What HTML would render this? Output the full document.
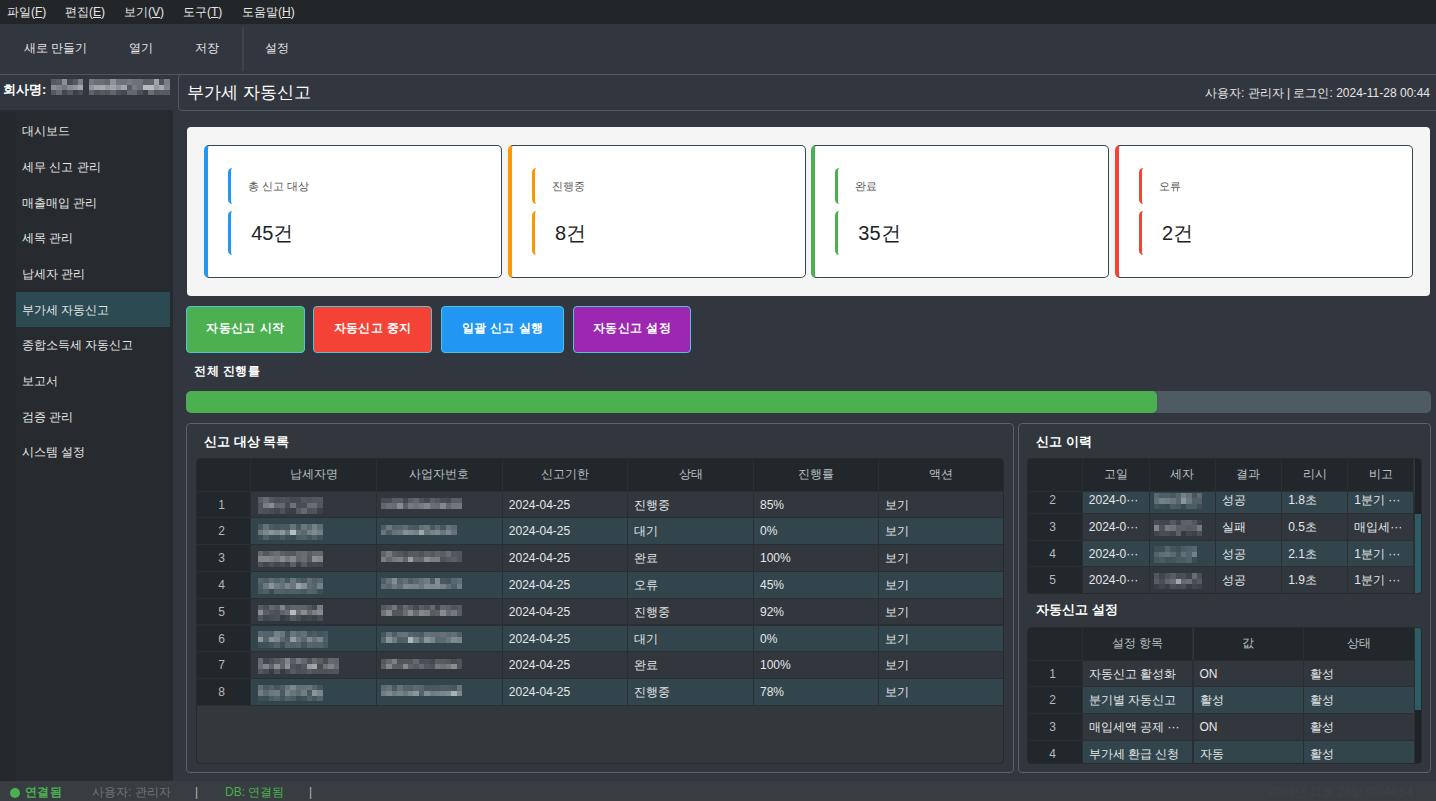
<!DOCTYPE html><html lang="ko"><head><meta charset="utf-8"><title>부가세 자동신고</title><style>
*{box-sizing:border-box;margin:0;padding:0}
html,body{width:1436px;height:801px;overflow:hidden;background:#32363e;}
body{position:relative;font-family:"Liberation Sans",sans-serif;font-size:12px;color:#e4e7e9;}
.abs{position:absolute}
.menubar{left:0;top:0;width:1436px;height:24px;background:#232629}
.menubar span{position:absolute;top:0;line-height:24px;font-size:12px;color:#e6e6e6;white-space:nowrap}
.menubar u{text-decoration:underline}
.toolbar{left:0;top:24px;width:1436px;height:50.5px;background:#32363e;border-bottom:1.5px solid #4c565b}
.toolbar span{position:absolute;top:0;line-height:49px;font-size:12px;color:#e6e6e6;white-space:nowrap;transform:translateX(-50%)}
.tsep{left:242px;top:27px;width:2px;height:44px;background:#3d454b}
.company{left:3px;top:80.7px;font-size:13px;font-weight:bold;color:#fff;line-height:18px;white-space:nowrap}
.sidebar{left:0;top:110px;width:173px;height:672px;background:#272b2f;border-radius:0 3px 3px 0}
.sidebar .stripe{position:absolute;left:0;top:2px;width:16px;bottom:0;background:#25292d;border-radius:0 0 0 3px}
.sidebar .it{position:absolute;left:16px;width:154px;height:35.6px;line-height:37.6px;padding-left:6px;font-size:12px;color:#e6e6e6;white-space:nowrap}
.sidebar .sel{background:#2b4a52}
.hbox{left:178px;top:73.8px;width:1262px;height:37.2px;border:1.4px solid #4f5a5f;border-radius:4px;background:#32363e}
.htitle{left:187px;top:81px;font-size:17px;line-height:24px;color:#fff;white-space:nowrap}
.hright{right:6px;top:84px;font-size:12px;line-height:18px;color:#e6e6e6;white-space:nowrap}
.panel{left:187px;top:127px;width:1243px;height:168.5px;background:#f5f5f5;border-radius:4px}
.card{top:144.5px;width:297.5px;height:133px;background:#fff;border:1.8px solid #37474f;border-left-width:4px;border-radius:5px}
.card .bar{position:absolute;left:20px;width:9px;border-left:3.6px solid;border-radius:5px}
.card .lb{position:absolute;left:40px;top:32px;font-size:11px;line-height:16px;color:#555;white-space:nowrap}
.card .val{position:absolute;left:43px;top:74px;font-size:20px;line-height:26px;color:#222;white-space:nowrap}
.btn{top:306px;height:46.5px;border:1.5px solid #4fc4dc;border-radius:4px;color:#fff;font-weight:bold;font-size:12px;text-align:center;line-height:42.5px;letter-spacing:.4px;white-space:nowrap}
.plabel{left:194px;top:362px;font-size:12px;font-weight:bold;color:#fff;line-height:18px;white-space:nowrap;letter-spacing:.5px}
.prog{left:186px;top:391px;width:1244.5px;height:22px;background:#4f5b62;border-radius:5px;overflow:hidden}
.prog i{display:block;width:970.5px;height:100%;background:#4caf50;border-radius:5px}
.group{border:1.8px solid #54646a;border-radius:4px;background:#31373c}
.gtitle{font-size:13px;font-weight:bold;color:#fff;line-height:18px;white-space:nowrap}
.tbl{background:#33383d;border:1.5px solid #272b30;border-radius:4px;overflow:hidden}
.tbl .c{position:absolute;overflow:hidden;white-space:nowrap;font-size:12px;border-right:1px solid #2a2f34;border-bottom:1px solid #2a2f34}
.tbl .h{background:#22272b;color:#b9c0c4;text-align:center}
.tbl .n{background:#22272b;color:#b2b9bd;text-align:center;padding-right:4px}
.tbl .a{background:#31373d;color:#e4e7e9;padding-left:6px}
.tbl .b{background:#33454c;color:#e4e7e9;padding-left:6px}
.mz{position:absolute;filter:blur(.6px)}
.mz i{display:block;height:5.4px}
.status{left:0;top:780.5px;width:1436px;height:20.5px;background:#383d41}
.status span{position:absolute;top:1.5px;line-height:20px;font-size:12px;white-space:nowrap}
</style></head><body>
<div class="abs menubar">
<span style="left:7px">파일(<u>F</u>)</span>
<span style="left:65px">편집(<u>E</u>)</span>
<span style="left:124px">보기(<u>V</u>)</span>
<span style="left:183px">도구(<u>T</u>)</span>
<span style="left:242px">도움말(<u>H</u>)</span>
</div>
<div class="abs toolbar">
<span style="left:55.5px">새로 만들기</span>
<span style="left:141px">열기</span>
<span style="left:207px">저장</span>
<span style="left:276.5px">설정</span>
</div><div class="abs tsep"></div>
<div class="abs company">회사명:</div>
<div class="mz" style="left:51px;top:79.3px;width:118.8px"><i style="background:linear-gradient(90deg,rgba(205,210,214,0.22) 0.0px 5.4px,rgba(205,210,214,0.26) 5.4px 10.8px,rgba(205,210,214,0.57) 10.8px 16.2px,rgba(205,210,214,0.14) 16.2px 21.6px,rgba(205,210,214,0.23) 21.6px 27.0px,rgba(205,210,214,0.48) 27.0px 32.4px,rgba(205,210,214,0.00) 32.4px 37.8px,rgba(205,210,214,0.43) 37.8px 43.2px,rgba(205,210,214,0.36) 43.2px 48.6px,rgba(205,210,214,0.36) 48.6px 54.0px,rgba(205,210,214,0.32) 54.0px 59.4px,rgba(205,210,214,0.59) 59.4px 64.8px,rgba(205,210,214,0.40) 64.8px 70.2px,rgba(205,210,214,0.39) 70.2px 75.6px,rgba(205,210,214,0.44) 75.6px 81.0px,rgba(205,210,214,0.39) 81.0px 86.4px,rgba(205,210,214,0.39) 86.4px 91.8px,rgba(205,210,214,0.27) 91.8px 97.2px,rgba(205,210,214,0.29) 97.2px 102.6px,rgba(205,210,214,0.71) 102.6px 108.0px,rgba(205,210,214,0.18) 108.0px 113.4px,rgba(205,210,214,0.47) 113.4px 118.8px)"></i><i style="background:linear-gradient(90deg,rgba(205,210,214,0.58) 0.0px 5.4px,rgba(205,210,214,0.50) 5.4px 10.8px,rgba(205,210,214,0.41) 10.8px 16.2px,rgba(205,210,214,0.55) 16.2px 21.6px,rgba(205,210,214,0.61) 21.6px 27.0px,rgba(205,210,214,0.72) 27.0px 32.4px,rgba(205,210,214,0.00) 32.4px 37.8px,rgba(205,210,214,0.61) 37.8px 43.2px,rgba(205,210,214,0.72) 43.2px 48.6px,rgba(205,210,214,0.75) 48.6px 54.0px,rgba(205,210,214,0.63) 54.0px 59.4px,rgba(205,210,214,0.71) 59.4px 64.8px,rgba(205,210,214,0.59) 64.8px 70.2px,rgba(205,210,214,0.72) 70.2px 75.6px,rgba(205,210,214,0.24) 75.6px 81.0px,rgba(205,210,214,0.44) 81.0px 86.4px,rgba(205,210,214,0.37) 86.4px 91.8px,rgba(205,210,214,0.85) 91.8px 97.2px,rgba(205,210,214,0.85) 97.2px 102.6px,rgba(205,210,214,0.64) 102.6px 108.0px,rgba(205,210,214,0.74) 108.0px 113.4px,rgba(205,210,214,0.50) 113.4px 118.8px)"></i><i style="background:linear-gradient(90deg,rgba(205,210,214,0.22) 0.0px 5.4px,rgba(205,210,214,0.35) 5.4px 10.8px,rgba(205,210,214,0.11) 10.8px 16.2px,rgba(205,210,214,0.22) 16.2px 21.6px,rgba(205,210,214,0.07) 21.6px 27.0px,rgba(205,210,214,0.14) 27.0px 32.4px,rgba(205,210,214,0.00) 32.4px 37.8px,rgba(205,210,214,0.30) 37.8px 43.2px,rgba(205,210,214,0.18) 43.2px 48.6px,rgba(205,210,214,0.23) 48.6px 54.0px,rgba(205,210,214,0.21) 54.0px 59.4px,rgba(205,210,214,0.31) 59.4px 64.8px,rgba(205,210,214,0.17) 64.8px 70.2px,rgba(205,210,214,0.12) 70.2px 75.6px,rgba(205,210,214,0.32) 75.6px 81.0px,rgba(205,210,214,0.32) 81.0px 86.4px,rgba(205,210,214,0.17) 86.4px 91.8px,rgba(205,210,214,0.06) 91.8px 97.2px,rgba(205,210,214,0.36) 97.2px 102.6px,rgba(205,210,214,0.22) 102.6px 108.0px,rgba(205,210,214,0.24) 108.0px 113.4px,rgba(205,210,214,0.24) 113.4px 118.8px)"></i></div>
<div class="abs sidebar"><div class="stripe"></div>
<div class="it" style="top:3.30px">대시보드</div>
<div class="it" style="top:38.95px">세무 신고 관리</div>
<div class="it" style="top:74.60px">매출매입 관리</div>
<div class="it" style="top:110.25px">세목 관리</div>
<div class="it" style="top:145.90px">납세자 관리</div>
<div class="it sel" style="top:181.55px">부가세 자동신고</div>
<div class="it" style="top:217.20px">종합소득세 자동신고</div>
<div class="it" style="top:252.85px">보고서</div>
<div class="it" style="top:288.50px">검증 관리</div>
<div class="it" style="top:324.15px">시스템 설정</div>
</div>
<div class="abs hbox"></div><div class="abs htitle">부가세 자동신고</div>
<div class="abs hright">사용자: 관리자 | 로그인: 2024-11-28 00:44</div>
<div class="abs panel"></div>
<div class="abs card" style="left:204.2px;border-left-color:#2196f3"><div class="bar" style="top:22px;height:36.5px;border-left-color:#2196f3"></div><div class="bar" style="top:65px;height:44px;border-left-color:#2196f3"></div><div class="lb">총 신고 대상</div><div class="val">45건</div></div>
<div class="abs card" style="left:508px;border-left-color:#ff9800"><div class="bar" style="top:22px;height:36.5px;border-left-color:#ff9800"></div><div class="bar" style="top:65px;height:44px;border-left-color:#ff9800"></div><div class="lb">진행중</div><div class="val">8건</div></div>
<div class="abs card" style="left:811.3px;border-left-color:#4caf50"><div class="bar" style="top:22px;height:36.5px;border-left-color:#4caf50"></div><div class="bar" style="top:65px;height:44px;border-left-color:#4caf50"></div><div class="lb">완료</div><div class="val">35건</div></div>
<div class="abs card" style="left:1115px;border-left-color:#f44336"><div class="bar" style="top:22px;height:36.5px;border-left-color:#f44336"></div><div class="bar" style="top:65px;height:44px;border-left-color:#f44336"></div><div class="lb">오류</div><div class="val">2건</div></div>
<div class="abs btn" style="left:186px;width:118.5px;background:#4caf50">자동신고 시작</div>
<div class="abs btn" style="left:313.2px;width:118.8px;background:#f44336">자동신고 중지</div>
<div class="abs btn" style="left:441px;width:123px;background:#2196f3">일괄 신고 실행</div>
<div class="abs btn" style="left:573px;width:118.3px;background:#9c27b0">자동신고 설정</div>
<div class="abs plabel">전체 진행률</div>
<div class="abs prog"><i></i></div>
<div class="abs group" style="left:186px;top:422.5px;width:827.5px;height:350.8px"></div>
<div class="abs gtitle" style="left:204px;top:432.5px">신고 대상 목록</div>
<div class="abs tbl" style="left:196px;top:458px;width:808px;height:306px"><div style="position:absolute;left:0;top:31.5px;width:807px;height:215.4px;background:#2a2f34"></div><div class="c n" style="left:0px;top:32.50px;width:54.4px;height:26.8px;line-height:27.8px">1</div><div class="c a" style="left:54.4px;top:32.50px;width:125.79999999999998px;height:26.8px"><div class="mz" style="left:6.5px;top:5.9px;width:64.8px"><i style="background:linear-gradient(90deg,rgba(205,210,214,0.25) 0.0px 5.4px,rgba(205,210,214,0.35) 5.4px 10.8px,rgba(205,210,214,0.22) 10.8px 16.2px,rgba(205,210,214,0.16) 16.2px 21.6px,rgba(205,210,214,0.18) 21.6px 27.0px,rgba(205,210,214,0.16) 27.0px 32.4px,rgba(205,210,214,0.12) 32.4px 37.8px,rgba(205,210,214,0.12) 37.8px 43.2px,rgba(205,210,214,0.20) 43.2px 48.6px,rgba(205,210,214,0.18) 48.6px 54.0px,rgba(205,210,214,0.21) 54.0px 59.4px,rgba(205,210,214,0.21) 59.4px 64.8px)"></i><i style="background:linear-gradient(90deg,rgba(205,210,214,0.19) 0.0px 5.4px,rgba(205,210,214,0.45) 5.4px 10.8px,rgba(205,210,214,0.55) 10.8px 16.2px,rgba(205,210,214,0.31) 16.2px 21.6px,rgba(205,210,214,0.33) 21.6px 27.0px,rgba(205,210,214,0.14) 27.0px 32.4px,rgba(205,210,214,0.39) 32.4px 37.8px,rgba(205,210,214,0.15) 37.8px 43.2px,rgba(205,210,214,0.14) 43.2px 48.6px,rgba(205,210,214,0.34) 48.6px 54.0px,rgba(205,210,214,0.36) 54.0px 59.4px,rgba(205,210,214,0.21) 59.4px 64.8px)"></i><i style="background:linear-gradient(90deg,rgba(205,210,214,0.19) 0.0px 5.4px,rgba(205,210,214,0.17) 5.4px 10.8px,rgba(205,210,214,0.14) 10.8px 16.2px,rgba(205,210,214,0.10) 16.2px 21.6px,rgba(205,210,214,0.18) 21.6px 27.0px,rgba(205,210,214,0.07) 27.0px 32.4px,rgba(205,210,214,0.05) 32.4px 37.8px,rgba(205,210,214,0.23) 37.8px 43.2px,rgba(205,210,214,0.33) 43.2px 48.6px,rgba(205,210,214,0.18) 48.6px 54.0px,rgba(205,210,214,0.20) 54.0px 59.4px,rgba(205,210,214,0.07) 59.4px 64.8px)"></i></div></div><div class="c a" style="left:180.2px;top:32.50px;width:125.60000000000002px;height:26.8px"><div class="mz" style="left:4px;top:6.4px;width:81.0px"><i style="background:linear-gradient(90deg,rgba(205,210,214,0.14) 0.0px 5.4px,rgba(205,210,214,0.14) 5.4px 10.8px,rgba(205,210,214,0.25) 10.8px 16.2px,rgba(205,210,214,0.25) 16.2px 21.6px,rgba(205,210,214,0.11) 21.6px 27.0px,rgba(205,210,214,0.25) 27.0px 32.4px,rgba(205,210,214,0.31) 32.4px 37.8px,rgba(205,210,214,0.19) 37.8px 43.2px,rgba(205,210,214,0.13) 43.2px 48.6px,rgba(205,210,214,0.27) 48.6px 54.0px,rgba(205,210,214,0.21) 54.0px 59.4px,rgba(205,210,214,0.15) 59.4px 64.8px,rgba(205,210,214,0.13) 64.8px 70.2px,rgba(205,210,214,0.25) 70.2px 75.6px,rgba(205,210,214,0.25) 75.6px 81.0px)"></i><i style="background:linear-gradient(90deg,rgba(205,210,214,0.30) 0.0px 5.4px,rgba(205,210,214,0.37) 5.4px 10.8px,rgba(205,210,214,0.34) 10.8px 16.2px,rgba(205,210,214,0.54) 16.2px 21.6px,rgba(205,210,214,0.25) 21.6px 27.0px,rgba(205,210,214,0.43) 27.0px 32.4px,rgba(205,210,214,0.39) 32.4px 37.8px,rgba(205,210,214,0.44) 37.8px 43.2px,rgba(205,210,214,0.51) 43.2px 48.6px,rgba(205,210,214,0.36) 48.6px 54.0px,rgba(205,210,214,0.35) 54.0px 59.4px,rgba(205,210,214,0.52) 59.4px 64.8px,rgba(205,210,214,0.32) 64.8px 70.2px,rgba(205,210,214,0.41) 70.2px 75.6px,rgba(205,210,214,0.42) 75.6px 81.0px)"></i></div></div><div class="c a" style="left:305.8px;top:32.50px;width:125.59999999999997px;height:26.8px;line-height:27.8px">2024-04-25</div><div class="c a" style="left:431.4px;top:32.50px;width:125.60000000000002px;height:26.8px;line-height:27.8px">진행중</div><div class="c a" style="left:557px;top:32.50px;width:125.39999999999998px;height:26.8px;line-height:27.8px">85%</div><div class="c a" style="left:682.4px;top:32.50px;width:124.60000000000002px;height:26.8px;line-height:27.8px">보기</div><div class="c n" style="left:0px;top:59.30px;width:54.4px;height:26.8px;line-height:27.8px">2</div><div class="c b" style="left:54.4px;top:59.30px;width:125.79999999999998px;height:26.8px"><div class="mz" style="left:6.5px;top:5.9px;width:64.8px"><i style="background:linear-gradient(90deg,rgba(205,210,214,0.13) 0.0px 5.4px,rgba(205,210,214,0.33) 5.4px 10.8px,rgba(205,210,214,0.17) 10.8px 16.2px,rgba(205,210,214,0.12) 16.2px 21.6px,rgba(205,210,214,0.15) 21.6px 27.0px,rgba(205,210,214,0.15) 27.0px 32.4px,rgba(205,210,214,0.34) 32.4px 37.8px,rgba(205,210,214,0.13) 37.8px 43.2px,rgba(205,210,214,0.36) 43.2px 48.6px,rgba(205,210,214,0.26) 48.6px 54.0px,rgba(205,210,214,0.43) 54.0px 59.4px,rgba(205,210,214,0.29) 59.4px 64.8px)"></i><i style="background:linear-gradient(90deg,rgba(205,210,214,0.35) 0.0px 5.4px,rgba(205,210,214,0.47) 5.4px 10.8px,rgba(205,210,214,0.57) 10.8px 16.2px,rgba(205,210,214,0.49) 16.2px 21.6px,rgba(205,210,214,0.59) 21.6px 27.0px,rgba(205,210,214,0.36) 27.0px 32.4px,rgba(205,210,214,0.85) 32.4px 37.8px,rgba(205,210,214,0.33) 37.8px 43.2px,rgba(205,210,214,0.25) 43.2px 48.6px,rgba(205,210,214,0.43) 48.6px 54.0px,rgba(205,210,214,0.50) 54.0px 59.4px,rgba(205,210,214,0.41) 59.4px 64.8px)"></i><i style="background:linear-gradient(90deg,rgba(205,210,214,0.05) 0.0px 5.4px,rgba(205,210,214,0.20) 5.4px 10.8px,rgba(205,210,214,0.08) 10.8px 16.2px,rgba(205,210,214,0.07) 16.2px 21.6px,rgba(205,210,214,0.16) 21.6px 27.0px,rgba(205,210,214,0.07) 27.0px 32.4px,rgba(205,210,214,0.05) 32.4px 37.8px,rgba(205,210,214,0.17) 37.8px 43.2px,rgba(205,210,214,0.19) 43.2px 48.6px,rgba(205,210,214,0.12) 48.6px 54.0px,rgba(205,210,214,0.19) 54.0px 59.4px,rgba(205,210,214,0.10) 59.4px 64.8px)"></i></div></div><div class="c b" style="left:180.2px;top:59.30px;width:125.60000000000002px;height:26.8px"><div class="mz" style="left:4px;top:6.4px;width:75.6px"><i style="background:linear-gradient(90deg,rgba(205,210,214,0.17) 0.0px 5.4px,rgba(205,210,214,0.37) 5.4px 10.8px,rgba(205,210,214,0.22) 10.8px 16.2px,rgba(205,210,214,0.24) 16.2px 21.6px,rgba(205,210,214,0.29) 21.6px 27.0px,rgba(205,210,214,0.17) 27.0px 32.4px,rgba(205,210,214,0.14) 32.4px 37.8px,rgba(205,210,214,0.31) 37.8px 43.2px,rgba(205,210,214,0.36) 43.2px 48.6px,rgba(205,210,214,0.14) 48.6px 54.0px,rgba(205,210,214,0.27) 54.0px 59.4px,rgba(205,210,214,0.13) 59.4px 64.8px,rgba(205,210,214,0.34) 64.8px 70.2px,rgba(205,210,214,0.26) 70.2px 75.6px)"></i><i style="background:linear-gradient(90deg,rgba(205,210,214,0.34) 0.0px 5.4px,rgba(205,210,214,0.18) 5.4px 10.8px,rgba(205,210,214,0.33) 10.8px 16.2px,rgba(205,210,214,0.36) 16.2px 21.6px,rgba(205,210,214,0.54) 21.6px 27.0px,rgba(205,210,214,0.49) 27.0px 32.4px,rgba(205,210,214,0.43) 32.4px 37.8px,rgba(205,210,214,0.70) 37.8px 43.2px,rgba(205,210,214,0.36) 43.2px 48.6px,rgba(205,210,214,0.44) 48.6px 54.0px,rgba(205,210,214,0.49) 54.0px 59.4px,rgba(205,210,214,0.36) 59.4px 64.8px,rgba(205,210,214,0.48) 64.8px 70.2px,rgba(205,210,214,0.33) 70.2px 75.6px)"></i></div></div><div class="c b" style="left:305.8px;top:59.30px;width:125.59999999999997px;height:26.8px;line-height:27.8px">2024-04-25</div><div class="c b" style="left:431.4px;top:59.30px;width:125.60000000000002px;height:26.8px;line-height:27.8px">대기</div><div class="c b" style="left:557px;top:59.30px;width:125.39999999999998px;height:26.8px;line-height:27.8px">0%</div><div class="c b" style="left:682.4px;top:59.30px;width:124.60000000000002px;height:26.8px;line-height:27.8px">보기</div><div class="c n" style="left:0px;top:86.10px;width:54.4px;height:26.8px;line-height:27.8px">3</div><div class="c a" style="left:54.4px;top:86.10px;width:125.79999999999998px;height:26.8px"><div class="mz" style="left:6.5px;top:5.9px;width:64.8px"><i style="background:linear-gradient(90deg,rgba(205,210,214,0.33) 0.0px 5.4px,rgba(205,210,214,0.21) 5.4px 10.8px,rgba(205,210,214,0.30) 10.8px 16.2px,rgba(205,210,214,0.36) 16.2px 21.6px,rgba(205,210,214,0.27) 21.6px 27.0px,rgba(205,210,214,0.23) 27.0px 32.4px,rgba(205,210,214,0.22) 32.4px 37.8px,rgba(205,210,214,0.33) 37.8px 43.2px,rgba(205,210,214,0.35) 43.2px 48.6px,rgba(205,210,214,0.25) 48.6px 54.0px,rgba(205,210,214,0.33) 54.0px 59.4px,rgba(205,210,214,0.33) 59.4px 64.8px)"></i><i style="background:linear-gradient(90deg,rgba(205,210,214,0.50) 0.0px 5.4px,rgba(205,210,214,0.51) 5.4px 10.8px,rgba(205,210,214,0.47) 10.8px 16.2px,rgba(205,210,214,0.42) 16.2px 21.6px,rgba(205,210,214,0.55) 21.6px 27.0px,rgba(205,210,214,0.42) 27.0px 32.4px,rgba(205,210,214,0.53) 32.4px 37.8px,rgba(205,210,214,0.31) 37.8px 43.2px,rgba(205,210,214,0.36) 43.2px 48.6px,rgba(205,210,214,0.23) 48.6px 54.0px,rgba(205,210,214,0.58) 54.0px 59.4px,rgba(205,210,214,0.53) 59.4px 64.8px)"></i><i style="background:linear-gradient(90deg,rgba(205,210,214,0.18) 0.0px 5.4px,rgba(205,210,214,0.10) 5.4px 10.8px,rgba(205,210,214,0.17) 10.8px 16.2px,rgba(205,210,214,0.11) 16.2px 21.6px,rgba(205,210,214,0.15) 21.6px 27.0px,rgba(205,210,214,0.08) 27.0px 32.4px,rgba(205,210,214,0.26) 32.4px 37.8px,rgba(205,210,214,0.07) 37.8px 43.2px,rgba(205,210,214,0.23) 43.2px 48.6px,rgba(205,210,214,0.10) 48.6px 54.0px,rgba(205,210,214,0.12) 54.0px 59.4px,rgba(205,210,214,0.10) 59.4px 64.8px)"></i></div></div><div class="c a" style="left:180.2px;top:86.10px;width:125.60000000000002px;height:26.8px"><div class="mz" style="left:4px;top:6.4px;width:81.0px"><i style="background:linear-gradient(90deg,rgba(205,210,214,0.30) 0.0px 5.4px,rgba(205,210,214,0.44) 5.4px 10.8px,rgba(205,210,214,0.26) 10.8px 16.2px,rgba(205,210,214,0.22) 16.2px 21.6px,rgba(205,210,214,0.16) 21.6px 27.0px,rgba(205,210,214,0.24) 27.0px 32.4px,rgba(205,210,214,0.24) 32.4px 37.8px,rgba(205,210,214,0.18) 37.8px 43.2px,rgba(205,210,214,0.28) 43.2px 48.6px,rgba(205,210,214,0.23) 48.6px 54.0px,rgba(205,210,214,0.30) 54.0px 59.4px,rgba(205,210,214,0.26) 59.4px 64.8px,rgba(205,210,214,0.35) 64.8px 70.2px,rgba(205,210,214,0.21) 70.2px 75.6px,rgba(205,210,214,0.20) 75.6px 81.0px)"></i><i style="background:linear-gradient(90deg,rgba(205,210,214,0.46) 0.0px 5.4px,rgba(205,210,214,0.33) 5.4px 10.8px,rgba(205,210,214,0.43) 10.8px 16.2px,rgba(205,210,214,0.48) 16.2px 21.6px,rgba(205,210,214,0.30) 21.6px 27.0px,rgba(205,210,214,0.68) 27.0px 32.4px,rgba(205,210,214,0.33) 32.4px 37.8px,rgba(205,210,214,0.31) 37.8px 43.2px,rgba(205,210,214,0.56) 43.2px 48.6px,rgba(205,210,214,0.46) 48.6px 54.0px,rgba(205,210,214,0.47) 54.0px 59.4px,rgba(205,210,214,0.18) 59.4px 64.8px,rgba(205,210,214,0.23) 64.8px 70.2px,rgba(205,210,214,0.27) 70.2px 75.6px,rgba(205,210,214,0.18) 75.6px 81.0px)"></i></div></div><div class="c a" style="left:305.8px;top:86.10px;width:125.59999999999997px;height:26.8px;line-height:27.8px">2024-04-25</div><div class="c a" style="left:431.4px;top:86.10px;width:125.60000000000002px;height:26.8px;line-height:27.8px">완료</div><div class="c a" style="left:557px;top:86.10px;width:125.39999999999998px;height:26.8px;line-height:27.8px">100%</div><div class="c a" style="left:682.4px;top:86.10px;width:124.60000000000002px;height:26.8px;line-height:27.8px">보기</div><div class="c n" style="left:0px;top:112.90px;width:54.4px;height:26.8px;line-height:27.8px">4</div><div class="c b" style="left:54.4px;top:112.90px;width:125.79999999999998px;height:26.8px"><div class="mz" style="left:6.5px;top:5.9px;width:64.8px"><i style="background:linear-gradient(90deg,rgba(205,210,214,0.23) 0.0px 5.4px,rgba(205,210,214,0.18) 5.4px 10.8px,rgba(205,210,214,0.29) 10.8px 16.2px,rgba(205,210,214,0.22) 16.2px 21.6px,rgba(205,210,214,0.29) 21.6px 27.0px,rgba(205,210,214,0.13) 27.0px 32.4px,rgba(205,210,214,0.35) 32.4px 37.8px,rgba(205,210,214,0.20) 37.8px 43.2px,rgba(205,210,214,0.14) 43.2px 48.6px,rgba(205,210,214,0.30) 48.6px 54.0px,rgba(205,210,214,0.20) 54.0px 59.4px,rgba(205,210,214,0.24) 59.4px 64.8px)"></i><i style="background:linear-gradient(90deg,rgba(205,210,214,0.18) 0.0px 5.4px,rgba(205,210,214,0.37) 5.4px 10.8px,rgba(205,210,214,0.57) 10.8px 16.2px,rgba(205,210,214,0.39) 16.2px 21.6px,rgba(205,210,214,0.32) 21.6px 27.0px,rgba(205,210,214,0.46) 27.0px 32.4px,rgba(205,210,214,0.35) 32.4px 37.8px,rgba(205,210,214,0.67) 37.8px 43.2px,rgba(205,210,214,0.53) 43.2px 48.6px,rgba(205,210,214,0.28) 48.6px 54.0px,rgba(205,210,214,0.23) 54.0px 59.4px,rgba(205,210,214,0.42) 59.4px 64.8px)"></i><i style="background:linear-gradient(90deg,rgba(205,210,214,0.14) 0.0px 5.4px,rgba(205,210,214,0.18) 5.4px 10.8px,rgba(205,210,214,0.05) 10.8px 16.2px,rgba(205,210,214,0.20) 16.2px 21.6px,rgba(205,210,214,0.20) 21.6px 27.0px,rgba(205,210,214,0.17) 27.0px 32.4px,rgba(205,210,214,0.19) 32.4px 37.8px,rgba(205,210,214,0.18) 37.8px 43.2px,rgba(205,210,214,0.15) 43.2px 48.6px,rgba(205,210,214,0.23) 48.6px 54.0px,rgba(205,210,214,0.20) 54.0px 59.4px,rgba(205,210,214,0.07) 59.4px 64.8px)"></i></div></div><div class="c b" style="left:180.2px;top:112.90px;width:125.60000000000002px;height:26.8px"><div class="mz" style="left:4px;top:6.4px;width:81.0px"><i style="background:linear-gradient(90deg,rgba(205,210,214,0.18) 0.0px 5.4px,rgba(205,210,214,0.32) 5.4px 10.8px,rgba(205,210,214,0.51) 10.8px 16.2px,rgba(205,210,214,0.23) 16.2px 21.6px,rgba(205,210,214,0.30) 21.6px 27.0px,rgba(205,210,214,0.18) 27.0px 32.4px,rgba(205,210,214,0.25) 32.4px 37.8px,rgba(205,210,214,0.33) 37.8px 43.2px,rgba(205,210,214,0.39) 43.2px 48.6px,rgba(205,210,214,0.18) 48.6px 54.0px,rgba(205,210,214,0.51) 54.0px 59.4px,rgba(205,210,214,0.13) 59.4px 64.8px,rgba(205,210,214,0.11) 64.8px 70.2px,rgba(205,210,214,0.24) 70.2px 75.6px,rgba(205,210,214,0.30) 75.6px 81.0px)"></i><i style="background:linear-gradient(90deg,rgba(205,210,214,0.30) 0.0px 5.4px,rgba(205,210,214,0.25) 5.4px 10.8px,rgba(205,210,214,0.38) 10.8px 16.2px,rgba(205,210,214,0.29) 16.2px 21.6px,rgba(205,210,214,0.48) 21.6px 27.0px,rgba(205,210,214,0.45) 27.0px 32.4px,rgba(205,210,214,0.44) 32.4px 37.8px,rgba(205,210,214,0.36) 37.8px 43.2px,rgba(205,210,214,0.51) 43.2px 48.6px,rgba(205,210,214,0.48) 48.6px 54.0px,rgba(205,210,214,0.50) 54.0px 59.4px,rgba(205,210,214,0.44) 59.4px 64.8px,rgba(205,210,214,0.30) 64.8px 70.2px,rgba(205,210,214,0.19) 70.2px 75.6px,rgba(205,210,214,0.40) 75.6px 81.0px)"></i></div></div><div class="c b" style="left:305.8px;top:112.90px;width:125.59999999999997px;height:26.8px;line-height:27.8px">2024-04-25</div><div class="c b" style="left:431.4px;top:112.90px;width:125.60000000000002px;height:26.8px;line-height:27.8px">오류</div><div class="c b" style="left:557px;top:112.90px;width:125.39999999999998px;height:26.8px;line-height:27.8px">45%</div><div class="c b" style="left:682.4px;top:112.90px;width:124.60000000000002px;height:26.8px;line-height:27.8px">보기</div><div class="c n" style="left:0px;top:139.70px;width:54.4px;height:26.8px;line-height:27.8px">5</div><div class="c a" style="left:54.4px;top:139.70px;width:125.79999999999998px;height:26.8px"><div class="mz" style="left:6.5px;top:5.9px;width:64.8px"><i style="background:linear-gradient(90deg,rgba(205,210,214,0.25) 0.0px 5.4px,rgba(205,210,214,0.17) 5.4px 10.8px,rgba(205,210,214,0.33) 10.8px 16.2px,rgba(205,210,214,0.26) 16.2px 21.6px,rgba(205,210,214,0.50) 21.6px 27.0px,rgba(205,210,214,0.24) 27.0px 32.4px,rgba(205,210,214,0.30) 32.4px 37.8px,rgba(205,210,214,0.30) 37.8px 43.2px,rgba(205,210,214,0.29) 43.2px 48.6px,rgba(205,210,214,0.22) 48.6px 54.0px,rgba(205,210,214,0.12) 54.0px 59.4px,rgba(205,210,214,0.46) 59.4px 64.8px)"></i><i style="background:linear-gradient(90deg,rgba(205,210,214,0.57) 0.0px 5.4px,rgba(205,210,214,0.25) 5.4px 10.8px,rgba(205,210,214,0.19) 10.8px 16.2px,rgba(205,210,214,0.16) 16.2px 21.6px,rgba(205,210,214,0.29) 21.6px 27.0px,rgba(205,210,214,0.36) 27.0px 32.4px,rgba(205,210,214,0.85) 32.4px 37.8px,rgba(205,210,214,0.37) 37.8px 43.2px,rgba(205,210,214,0.56) 43.2px 48.6px,rgba(205,210,214,0.34) 48.6px 54.0px,rgba(205,210,214,0.48) 54.0px 59.4px,rgba(205,210,214,0.55) 59.4px 64.8px)"></i><i style="background:linear-gradient(90deg,rgba(205,210,214,0.22) 0.0px 5.4px,rgba(205,210,214,0.11) 5.4px 10.8px,rgba(205,210,214,0.14) 10.8px 16.2px,rgba(205,210,214,0.17) 16.2px 21.6px,rgba(205,210,214,0.04) 21.6px 27.0px,rgba(205,210,214,0.09) 27.0px 32.4px,rgba(205,210,214,0.24) 32.4px 37.8px,rgba(205,210,214,0.16) 37.8px 43.2px,rgba(205,210,214,0.08) 43.2px 48.6px,rgba(205,210,214,0.11) 48.6px 54.0px,rgba(205,210,214,0.07) 54.0px 59.4px,rgba(205,210,214,0.15) 59.4px 64.8px)"></i></div></div><div class="c a" style="left:180.2px;top:139.70px;width:125.60000000000002px;height:26.8px"><div class="mz" style="left:4px;top:6.4px;width:81.0px"><i style="background:linear-gradient(90deg,rgba(205,210,214,0.22) 0.0px 5.4px,rgba(205,210,214,0.28) 5.4px 10.8px,rgba(205,210,214,0.41) 10.8px 16.2px,rgba(205,210,214,0.16) 16.2px 21.6px,rgba(205,210,214,0.33) 21.6px 27.0px,rgba(205,210,214,0.23) 27.0px 32.4px,rgba(205,210,214,0.13) 32.4px 37.8px,rgba(205,210,214,0.26) 37.8px 43.2px,rgba(205,210,214,0.19) 43.2px 48.6px,rgba(205,210,214,0.33) 48.6px 54.0px,rgba(205,210,214,0.11) 54.0px 59.4px,rgba(205,210,214,0.31) 59.4px 64.8px,rgba(205,210,214,0.27) 64.8px 70.2px,rgba(205,210,214,0.19) 70.2px 75.6px,rgba(205,210,214,0.23) 75.6px 81.0px)"></i><i style="background:linear-gradient(90deg,rgba(205,210,214,0.39) 0.0px 5.4px,rgba(205,210,214,0.55) 5.4px 10.8px,rgba(205,210,214,0.21) 10.8px 16.2px,rgba(205,210,214,0.21) 16.2px 21.6px,rgba(205,210,214,0.36) 21.6px 27.0px,rgba(205,210,214,0.55) 27.0px 32.4px,rgba(205,210,214,0.34) 32.4px 37.8px,rgba(205,210,214,0.53) 37.8px 43.2px,rgba(205,210,214,0.48) 43.2px 48.6px,rgba(205,210,214,0.24) 48.6px 54.0px,rgba(205,210,214,0.27) 54.0px 59.4px,rgba(205,210,214,0.55) 59.4px 64.8px,rgba(205,210,214,0.34) 64.8px 70.2px,rgba(205,210,214,0.43) 70.2px 75.6px,rgba(205,210,214,0.25) 75.6px 81.0px)"></i></div></div><div class="c a" style="left:305.8px;top:139.70px;width:125.59999999999997px;height:26.8px;line-height:27.8px">2024-04-25</div><div class="c a" style="left:431.4px;top:139.70px;width:125.60000000000002px;height:26.8px;line-height:27.8px">진행중</div><div class="c a" style="left:557px;top:139.70px;width:125.39999999999998px;height:26.8px;line-height:27.8px">92%</div><div class="c a" style="left:682.4px;top:139.70px;width:124.60000000000002px;height:26.8px;line-height:27.8px">보기</div><div class="c n" style="left:0px;top:166.50px;width:54.4px;height:26.8px;line-height:27.8px">6</div><div class="c b" style="left:54.4px;top:166.50px;width:125.79999999999998px;height:26.8px"><div class="mz" style="left:6.5px;top:5.9px;width:70.2px"><i style="background:linear-gradient(90deg,rgba(205,210,214,0.25) 0.0px 5.4px,rgba(205,210,214,0.21) 5.4px 10.8px,rgba(205,210,214,0.21) 10.8px 16.2px,rgba(205,210,214,0.43) 16.2px 21.6px,rgba(205,210,214,0.36) 21.6px 27.0px,rgba(205,210,214,0.11) 27.0px 32.4px,rgba(205,210,214,0.35) 32.4px 37.8px,rgba(205,210,214,0.26) 37.8px 43.2px,rgba(205,210,214,0.31) 43.2px 48.6px,rgba(205,210,214,0.12) 48.6px 54.0px,rgba(205,210,214,0.17) 54.0px 59.4px,rgba(205,210,214,0.11) 59.4px 64.8px,rgba(205,210,214,0.15) 64.8px 70.2px)"></i><i style="background:linear-gradient(90deg,rgba(205,210,214,0.58) 0.0px 5.4px,rgba(205,210,214,0.23) 5.4px 10.8px,rgba(205,210,214,0.54) 10.8px 16.2px,rgba(205,210,214,0.48) 16.2px 21.6px,rgba(205,210,214,0.26) 21.6px 27.0px,rgba(205,210,214,0.17) 27.0px 32.4px,rgba(205,210,214,0.62) 32.4px 37.8px,rgba(205,210,214,0.38) 37.8px 43.2px,rgba(205,210,214,0.25) 43.2px 48.6px,rgba(205,210,214,0.48) 48.6px 54.0px,rgba(205,210,214,0.33) 54.0px 59.4px,rgba(205,210,214,0.45) 59.4px 64.8px,rgba(205,210,214,0.18) 64.8px 70.2px)"></i><i style="background:linear-gradient(90deg,rgba(205,210,214,0.08) 0.0px 5.4px,rgba(205,210,214,0.08) 5.4px 10.8px,rgba(205,210,214,0.13) 10.8px 16.2px,rgba(205,210,214,0.20) 16.2px 21.6px,rgba(205,210,214,0.07) 21.6px 27.0px,rgba(205,210,214,0.23) 27.0px 32.4px,rgba(205,210,214,0.20) 32.4px 37.8px,rgba(205,210,214,0.23) 37.8px 43.2px,rgba(205,210,214,0.11) 43.2px 48.6px,rgba(205,210,214,0.24) 48.6px 54.0px,rgba(205,210,214,0.20) 54.0px 59.4px,rgba(205,210,214,0.22) 59.4px 64.8px,rgba(205,210,214,0.14) 64.8px 70.2px)"></i></div></div><div class="c b" style="left:180.2px;top:166.50px;width:125.60000000000002px;height:26.8px"><div class="mz" style="left:4px;top:6.4px;width:81.0px"><i style="background:linear-gradient(90deg,rgba(205,210,214,0.12) 0.0px 5.4px,rgba(205,210,214,0.34) 5.4px 10.8px,rgba(205,210,214,0.18) 10.8px 16.2px,rgba(205,210,214,0.32) 16.2px 21.6px,rgba(205,210,214,0.33) 21.6px 27.0px,rgba(205,210,214,0.23) 27.0px 32.4px,rgba(205,210,214,0.20) 32.4px 37.8px,rgba(205,210,214,0.16) 37.8px 43.2px,rgba(205,210,214,0.33) 43.2px 48.6px,rgba(205,210,214,0.31) 48.6px 54.0px,rgba(205,210,214,0.29) 54.0px 59.4px,rgba(205,210,214,0.33) 59.4px 64.8px,rgba(205,210,214,0.28) 64.8px 70.2px,rgba(205,210,214,0.31) 70.2px 75.6px,rgba(205,210,214,0.19) 75.6px 81.0px)"></i><i style="background:linear-gradient(90deg,rgba(205,210,214,0.24) 0.0px 5.4px,rgba(205,210,214,0.56) 5.4px 10.8px,rgba(205,210,214,0.39) 10.8px 16.2px,rgba(205,210,214,0.18) 16.2px 21.6px,rgba(205,210,214,0.20) 21.6px 27.0px,rgba(205,210,214,0.80) 27.0px 32.4px,rgba(205,210,214,0.46) 32.4px 37.8px,rgba(205,210,214,0.26) 37.8px 43.2px,rgba(205,210,214,0.56) 43.2px 48.6px,rgba(205,210,214,0.47) 48.6px 54.0px,rgba(205,210,214,0.26) 54.0px 59.4px,rgba(205,210,214,0.28) 59.4px 64.8px,rgba(205,210,214,0.36) 64.8px 70.2px,rgba(205,210,214,0.50) 70.2px 75.6px,rgba(205,210,214,0.46) 75.6px 81.0px)"></i></div></div><div class="c b" style="left:305.8px;top:166.50px;width:125.59999999999997px;height:26.8px;line-height:27.8px">2024-04-25</div><div class="c b" style="left:431.4px;top:166.50px;width:125.60000000000002px;height:26.8px;line-height:27.8px">대기</div><div class="c b" style="left:557px;top:166.50px;width:125.39999999999998px;height:26.8px;line-height:27.8px">0%</div><div class="c b" style="left:682.4px;top:166.50px;width:124.60000000000002px;height:26.8px;line-height:27.8px">보기</div><div class="c n" style="left:0px;top:193.30px;width:54.4px;height:26.8px;line-height:27.8px">7</div><div class="c a" style="left:54.4px;top:193.30px;width:125.79999999999998px;height:26.8px"><div class="mz" style="left:6.5px;top:5.9px;width:81.0px"><i style="background:linear-gradient(90deg,rgba(205,210,214,0.34) 0.0px 5.4px,rgba(205,210,214,0.11) 5.4px 10.8px,rgba(205,210,214,0.16) 10.8px 16.2px,rgba(205,210,214,0.23) 16.2px 21.6px,rgba(205,210,214,0.30) 21.6px 27.0px,rgba(205,210,214,0.51) 27.0px 32.4px,rgba(205,210,214,0.26) 32.4px 37.8px,rgba(205,210,214,0.43) 37.8px 43.2px,rgba(205,210,214,0.32) 43.2px 48.6px,rgba(205,210,214,0.18) 48.6px 54.0px,rgba(205,210,214,0.34) 54.0px 59.4px,rgba(205,210,214,0.26) 59.4px 64.8px,rgba(205,210,214,0.15) 64.8px 70.2px,rgba(205,210,214,0.32) 70.2px 75.6px,rgba(205,210,214,0.30) 75.6px 81.0px)"></i><i style="background:linear-gradient(90deg,rgba(205,210,214,0.37) 0.0px 5.4px,rgba(205,210,214,0.50) 5.4px 10.8px,rgba(205,210,214,0.30) 10.8px 16.2px,rgba(205,210,214,0.57) 16.2px 21.6px,rgba(205,210,214,0.30) 21.6px 27.0px,rgba(205,210,214,0.59) 27.0px 32.4px,rgba(205,210,214,0.19) 32.4px 37.8px,rgba(205,210,214,0.15) 37.8px 43.2px,rgba(205,210,214,0.21) 43.2px 48.6px,rgba(205,210,214,0.65) 48.6px 54.0px,rgba(205,210,214,0.72) 54.0px 59.4px,rgba(205,210,214,0.15) 59.4px 64.8px,rgba(205,210,214,0.38) 64.8px 70.2px,rgba(205,210,214,0.50) 70.2px 75.6px,rgba(205,210,214,0.34) 75.6px 81.0px)"></i><i style="background:linear-gradient(90deg,rgba(205,210,214,0.22) 0.0px 5.4px,rgba(205,210,214,0.14) 5.4px 10.8px,rgba(205,210,214,0.04) 10.8px 16.2px,rgba(205,210,214,0.20) 16.2px 21.6px,rgba(205,210,214,0.04) 21.6px 27.0px,rgba(205,210,214,0.12) 27.0px 32.4px,rgba(205,210,214,0.23) 32.4px 37.8px,rgba(205,210,214,0.16) 37.8px 43.2px,rgba(205,210,214,0.18) 43.2px 48.6px,rgba(205,210,214,0.24) 48.6px 54.0px,rgba(205,210,214,0.18) 54.0px 59.4px,rgba(205,210,214,0.18) 59.4px 64.8px,rgba(205,210,214,0.18) 64.8px 70.2px,rgba(205,210,214,0.19) 70.2px 75.6px,rgba(205,210,214,0.20) 75.6px 81.0px)"></i></div></div><div class="c a" style="left:180.2px;top:193.30px;width:125.60000000000002px;height:26.8px"><div class="mz" style="left:4px;top:6.4px;width:81.0px"><i style="background:linear-gradient(90deg,rgba(205,210,214,0.21) 0.0px 5.4px,rgba(205,210,214,0.33) 5.4px 10.8px,rgba(205,210,214,0.47) 10.8px 16.2px,rgba(205,210,214,0.20) 16.2px 21.6px,rgba(205,210,214,0.21) 21.6px 27.0px,rgba(205,210,214,0.20) 27.0px 32.4px,rgba(205,210,214,0.32) 32.4px 37.8px,rgba(205,210,214,0.16) 37.8px 43.2px,rgba(205,210,214,0.16) 43.2px 48.6px,rgba(205,210,214,0.12) 48.6px 54.0px,rgba(205,210,214,0.25) 54.0px 59.4px,rgba(205,210,214,0.24) 59.4px 64.8px,rgba(205,210,214,0.21) 64.8px 70.2px,rgba(205,210,214,0.15) 70.2px 75.6px,rgba(205,210,214,0.19) 75.6px 81.0px)"></i><i style="background:linear-gradient(90deg,rgba(205,210,214,0.27) 0.0px 5.4px,rgba(205,210,214,0.52) 5.4px 10.8px,rgba(205,210,214,0.27) 10.8px 16.2px,rgba(205,210,214,0.26) 16.2px 21.6px,rgba(205,210,214,0.53) 21.6px 27.0px,rgba(205,210,214,0.29) 27.0px 32.4px,rgba(205,210,214,0.24) 32.4px 37.8px,rgba(205,210,214,0.32) 37.8px 43.2px,rgba(205,210,214,0.22) 43.2px 48.6px,rgba(205,210,214,0.19) 48.6px 54.0px,rgba(205,210,214,0.42) 54.0px 59.4px,rgba(205,210,214,0.39) 59.4px 64.8px,rgba(205,210,214,0.43) 64.8px 70.2px,rgba(205,210,214,0.56) 70.2px 75.6px,rgba(205,210,214,0.19) 75.6px 81.0px)"></i></div></div><div class="c a" style="left:305.8px;top:193.30px;width:125.59999999999997px;height:26.8px;line-height:27.8px">2024-04-25</div><div class="c a" style="left:431.4px;top:193.30px;width:125.60000000000002px;height:26.8px;line-height:27.8px">완료</div><div class="c a" style="left:557px;top:193.30px;width:125.39999999999998px;height:26.8px;line-height:27.8px">100%</div><div class="c a" style="left:682.4px;top:193.30px;width:124.60000000000002px;height:26.8px;line-height:27.8px">보기</div><div class="c n" style="left:0px;top:220.10px;width:54.4px;height:26.8px;line-height:27.8px">8</div><div class="c b" style="left:54.4px;top:220.10px;width:125.79999999999998px;height:26.8px"><div class="mz" style="left:6.5px;top:5.9px;width:64.8px"><i style="background:linear-gradient(90deg,rgba(205,210,214,0.31) 0.0px 5.4px,rgba(205,210,214,0.15) 5.4px 10.8px,rgba(205,210,214,0.22) 10.8px 16.2px,rgba(205,210,214,0.12) 16.2px 21.6px,rgba(205,210,214,0.19) 21.6px 27.0px,rgba(205,210,214,0.34) 27.0px 32.4px,rgba(205,210,214,0.47) 32.4px 37.8px,rgba(205,210,214,0.31) 37.8px 43.2px,rgba(205,210,214,0.32) 43.2px 48.6px,rgba(205,210,214,0.35) 48.6px 54.0px,rgba(205,210,214,0.23) 54.0px 59.4px,rgba(205,210,214,0.11) 59.4px 64.8px)"></i><i style="background:linear-gradient(90deg,rgba(205,210,214,0.40) 0.0px 5.4px,rgba(205,210,214,0.27) 5.4px 10.8px,rgba(205,210,214,0.37) 10.8px 16.2px,rgba(205,210,214,0.39) 16.2px 21.6px,rgba(205,210,214,0.15) 21.6px 27.0px,rgba(205,210,214,0.44) 27.0px 32.4px,rgba(205,210,214,0.35) 32.4px 37.8px,rgba(205,210,214,0.28) 37.8px 43.2px,rgba(205,210,214,0.40) 43.2px 48.6px,rgba(205,210,214,0.15) 48.6px 54.0px,rgba(205,210,214,0.57) 54.0px 59.4px,rgba(205,210,214,0.45) 59.4px 64.8px)"></i><i style="background:linear-gradient(90deg,rgba(205,210,214,0.07) 0.0px 5.4px,rgba(205,210,214,0.06) 5.4px 10.8px,rgba(205,210,214,0.16) 10.8px 16.2px,rgba(205,210,214,0.21) 16.2px 21.6px,rgba(205,210,214,0.11) 21.6px 27.0px,rgba(205,210,214,0.21) 27.0px 32.4px,rgba(205,210,214,0.17) 32.4px 37.8px,rgba(205,210,214,0.06) 37.8px 43.2px,rgba(205,210,214,0.09) 43.2px 48.6px,rgba(205,210,214,0.20) 48.6px 54.0px,rgba(205,210,214,0.12) 54.0px 59.4px,rgba(205,210,214,0.22) 59.4px 64.8px)"></i></div></div><div class="c b" style="left:180.2px;top:220.10px;width:125.60000000000002px;height:26.8px"><div class="mz" style="left:4px;top:6.4px;width:81.0px"><i style="background:linear-gradient(90deg,rgba(205,210,214,0.27) 0.0px 5.4px,rgba(205,210,214,0.33) 5.4px 10.8px,rgba(205,210,214,0.15) 10.8px 16.2px,rgba(205,210,214,0.32) 16.2px 21.6px,rgba(205,210,214,0.21) 21.6px 27.0px,rgba(205,210,214,0.21) 27.0px 32.4px,rgba(205,210,214,0.27) 32.4px 37.8px,rgba(205,210,214,0.24) 37.8px 43.2px,rgba(205,210,214,0.13) 43.2px 48.6px,rgba(205,210,214,0.14) 48.6px 54.0px,rgba(205,210,214,0.14) 54.0px 59.4px,rgba(205,210,214,0.18) 59.4px 64.8px,rgba(205,210,214,0.17) 64.8px 70.2px,rgba(205,210,214,0.14) 70.2px 75.6px,rgba(205,210,214,0.34) 75.6px 81.0px)"></i><i style="background:linear-gradient(90deg,rgba(205,210,214,0.40) 0.0px 5.4px,rgba(205,210,214,0.49) 5.4px 10.8px,rgba(205,210,214,0.38) 10.8px 16.2px,rgba(205,210,214,0.44) 16.2px 21.6px,rgba(205,210,214,0.37) 21.6px 27.0px,rgba(205,210,214,0.48) 27.0px 32.4px,rgba(205,210,214,0.57) 32.4px 37.8px,rgba(205,210,214,0.21) 37.8px 43.2px,rgba(205,210,214,0.51) 43.2px 48.6px,rgba(205,210,214,0.39) 48.6px 54.0px,rgba(205,210,214,0.43) 54.0px 59.4px,rgba(205,210,214,0.46) 59.4px 64.8px,rgba(205,210,214,0.50) 64.8px 70.2px,rgba(205,210,214,0.77) 70.2px 75.6px,rgba(205,210,214,0.48) 75.6px 81.0px)"></i></div></div><div class="c b" style="left:305.8px;top:220.10px;width:125.59999999999997px;height:26.8px;line-height:27.8px">2024-04-25</div><div class="c b" style="left:431.4px;top:220.10px;width:125.60000000000002px;height:26.8px;line-height:27.8px">진행중</div><div class="c b" style="left:557px;top:220.10px;width:125.39999999999998px;height:26.8px;line-height:27.8px">78%</div><div class="c b" style="left:682.4px;top:220.10px;width:124.60000000000002px;height:26.8px;line-height:27.8px">보기</div><div class="c h" style="left:0px;top:0;width:54.4px;height:32.5px;line-height:31.5px"></div><div class="c h" style="left:54.4px;top:0;width:125.79999999999998px;height:32.5px;line-height:31.5px">납세자명</div><div class="c h" style="left:180.2px;top:0;width:125.60000000000002px;height:32.5px;line-height:31.5px">사업자번호</div><div class="c h" style="left:305.8px;top:0;width:125.59999999999997px;height:32.5px;line-height:31.5px">신고기한</div><div class="c h" style="left:431.4px;top:0;width:125.60000000000002px;height:32.5px;line-height:31.5px">상태</div><div class="c h" style="left:557px;top:0;width:125.39999999999998px;height:32.5px;line-height:31.5px">진행률</div><div class="c h" style="left:682.4px;top:0;width:124.60000000000002px;height:32.5px;line-height:31.5px">액션</div></div>
<div class="abs group" style="left:1018px;top:422.5px;width:413px;height:350.8px"></div>
<div class="abs gtitle" style="left:1036px;top:432.5px">신고 이력</div>
<div class="abs tbl" style="left:1026.5px;top:458px;width:395px;height:135.5px"><div style="position:absolute;left:0;top:31.5px;width:387px;height:103.5px;background:#2a2f34"></div><div class="c n" style="left:0px;top:28.20px;width:55.3px;height:26.7px;line-height:27.7px">2</div><div class="c b" style="left:55.3px;top:28.20px;width:66.9px;height:26.7px;line-height:27.7px">2024-0···</div><div class="c b" style="left:122.2px;top:28.20px;width:66.10000000000001px;height:26.7px"><div class="mz" style="left:4px;top:5.85px;width:48.6px"><i style="background:linear-gradient(90deg,rgba(205,210,214,0.26) 0.0px 5.4px,rgba(205,210,214,0.18) 5.4px 10.8px,rgba(205,210,214,0.18) 10.8px 16.2px,rgba(205,210,214,0.15) 16.2px 21.6px,rgba(205,210,214,0.23) 21.6px 27.0px,rgba(205,210,214,0.42) 27.0px 32.4px,rgba(205,210,214,0.33) 32.4px 37.8px,rgba(205,210,214,0.12) 37.8px 43.2px,rgba(205,210,214,0.27) 43.2px 48.6px)"></i><i style="background:linear-gradient(90deg,rgba(205,210,214,0.30) 0.0px 5.4px,rgba(205,210,214,0.43) 5.4px 10.8px,rgba(205,210,214,0.40) 10.8px 16.2px,rgba(205,210,214,0.35) 16.2px 21.6px,rgba(205,210,214,0.24) 21.6px 27.0px,rgba(205,210,214,0.57) 27.0px 32.4px,rgba(205,210,214,0.37) 32.4px 37.8px,rgba(205,210,214,0.20) 37.8px 43.2px,rgba(205,210,214,0.20) 43.2px 48.6px)"></i><i style="background:linear-gradient(90deg,rgba(205,210,214,0.10) 0.0px 5.4px,rgba(205,210,214,0.05) 5.4px 10.8px,rgba(205,210,214,0.03) 10.8px 16.2px,rgba(205,210,214,0.17) 16.2px 21.6px,rgba(205,210,214,0.14) 21.6px 27.0px,rgba(205,210,214,0.04) 27.0px 32.4px,rgba(205,210,214,0.17) 32.4px 37.8px,rgba(205,210,214,0.17) 37.8px 43.2px,rgba(205,210,214,0.07) 43.2px 48.6px)"></i></div></div><div class="c b" style="left:188.3px;top:28.20px;width:66.39999999999998px;height:26.7px;line-height:27.7px">성공</div><div class="c b" style="left:254.7px;top:28.20px;width:66.0px;height:26.7px;line-height:27.7px">1.8초</div><div class="c b" style="left:320.7px;top:28.20px;width:66.30000000000001px;height:26.7px;line-height:27.7px">1분기 ···</div><div class="c n" style="left:0px;top:54.90px;width:55.3px;height:26.7px;line-height:27.7px">3</div><div class="c a" style="left:55.3px;top:54.90px;width:66.9px;height:26.7px;line-height:27.7px">2024-0···</div><div class="c a" style="left:122.2px;top:54.90px;width:66.10000000000001px;height:26.7px"><div class="mz" style="left:4px;top:5.85px;width:48.6px"><i style="background:linear-gradient(90deg,rgba(205,210,214,0.14) 0.0px 5.4px,rgba(205,210,214,0.11) 5.4px 10.8px,rgba(205,210,214,0.11) 10.8px 16.2px,rgba(205,210,214,0.22) 16.2px 21.6px,rgba(205,210,214,0.11) 21.6px 27.0px,rgba(205,210,214,0.27) 27.0px 32.4px,rgba(205,210,214,0.29) 32.4px 37.8px,rgba(205,210,214,0.21) 37.8px 43.2px,rgba(205,210,214,0.08) 43.2px 48.6px)"></i><i style="background:linear-gradient(90deg,rgba(205,210,214,0.50) 0.0px 5.4px,rgba(205,210,214,0.18) 5.4px 10.8px,rgba(205,210,214,0.43) 10.8px 16.2px,rgba(205,210,214,0.39) 16.2px 21.6px,rgba(205,210,214,0.26) 21.6px 27.0px,rgba(205,210,214,0.26) 27.0px 32.4px,rgba(205,210,214,0.24) 32.4px 37.8px,rgba(205,210,214,0.26) 37.8px 43.2px,rgba(205,210,214,0.43) 43.2px 48.6px)"></i><i style="background:linear-gradient(90deg,rgba(205,210,214,0.10) 0.0px 5.4px,rgba(205,210,214,0.15) 5.4px 10.8px,rgba(205,210,214,0.14) 10.8px 16.2px,rgba(205,210,214,0.10) 16.2px 21.6px,rgba(205,210,214,0.27) 21.6px 27.0px,rgba(205,210,214,0.03) 27.0px 32.4px,rgba(205,210,214,0.11) 32.4px 37.8px,rgba(205,210,214,0.07) 37.8px 43.2px,rgba(205,210,214,0.17) 43.2px 48.6px)"></i></div></div><div class="c a" style="left:188.3px;top:54.90px;width:66.39999999999998px;height:26.7px;line-height:27.7px">실패</div><div class="c a" style="left:254.7px;top:54.90px;width:66.0px;height:26.7px;line-height:27.7px">0.5초</div><div class="c a" style="left:320.7px;top:54.90px;width:66.30000000000001px;height:26.7px;line-height:27.7px">매입세···</div><div class="c n" style="left:0px;top:81.60px;width:55.3px;height:26.7px;line-height:27.7px">4</div><div class="c b" style="left:55.3px;top:81.60px;width:66.9px;height:26.7px;line-height:27.7px">2024-0···</div><div class="c b" style="left:122.2px;top:81.60px;width:66.10000000000001px;height:26.7px"><div class="mz" style="left:4px;top:5.85px;width:43.2px"><i style="background:linear-gradient(90deg,rgba(205,210,214,0.08) 0.0px 5.4px,rgba(205,210,214,0.08) 5.4px 10.8px,rgba(205,210,214,0.23) 10.8px 16.2px,rgba(205,210,214,0.12) 16.2px 21.6px,rgba(205,210,214,0.08) 21.6px 27.0px,rgba(205,210,214,0.17) 27.0px 32.4px,rgba(205,210,214,0.20) 32.4px 37.8px,rgba(205,210,214,0.24) 37.8px 43.2px)"></i><i style="background:linear-gradient(90deg,rgba(205,210,214,0.22) 0.0px 5.4px,rgba(205,210,214,0.29) 5.4px 10.8px,rgba(205,210,214,0.33) 10.8px 16.2px,rgba(205,210,214,0.26) 16.2px 21.6px,rgba(205,210,214,0.12) 21.6px 27.0px,rgba(205,210,214,0.30) 27.0px 32.4px,rgba(205,210,214,0.22) 32.4px 37.8px,rgba(205,210,214,0.42) 37.8px 43.2px)"></i><i style="background:linear-gradient(90deg,rgba(205,210,214,0.12) 0.0px 5.4px,rgba(205,210,214,0.16) 5.4px 10.8px,rgba(205,210,214,0.10) 10.8px 16.2px,rgba(205,210,214,0.11) 16.2px 21.6px,rgba(205,210,214,0.16) 21.6px 27.0px,rgba(205,210,214,0.16) 27.0px 32.4px,rgba(205,210,214,0.21) 32.4px 37.8px,rgba(205,210,214,0.05) 37.8px 43.2px)"></i></div></div><div class="c b" style="left:188.3px;top:81.60px;width:66.39999999999998px;height:26.7px;line-height:27.7px">성공</div><div class="c b" style="left:254.7px;top:81.60px;width:66.0px;height:26.7px;line-height:27.7px">2.1초</div><div class="c b" style="left:320.7px;top:81.60px;width:66.30000000000001px;height:26.7px;line-height:27.7px">1분기 ···</div><div class="c n" style="left:0px;top:108.30px;width:55.3px;height:26.7px;line-height:27.7px">5</div><div class="c a" style="left:55.3px;top:108.30px;width:66.9px;height:26.7px;line-height:27.7px">2024-0···</div><div class="c a" style="left:122.2px;top:108.30px;width:66.10000000000001px;height:26.7px"><div class="mz" style="left:4px;top:5.85px;width:48.6px"><i style="background:linear-gradient(90deg,rgba(205,210,214,0.22) 0.0px 5.4px,rgba(205,210,214,0.10) 5.4px 10.8px,rgba(205,210,214,0.18) 10.8px 16.2px,rgba(205,210,214,0.25) 16.2px 21.6px,rgba(205,210,214,0.14) 21.6px 27.0px,rgba(205,210,214,0.16) 27.0px 32.4px,rgba(205,210,214,0.08) 32.4px 37.8px,rgba(205,210,214,0.35) 37.8px 43.2px,rgba(205,210,214,0.16) 43.2px 48.6px)"></i><i style="background:linear-gradient(90deg,rgba(205,210,214,0.25) 0.0px 5.4px,rgba(205,210,214,0.16) 5.4px 10.8px,rgba(205,210,214,0.31) 10.8px 16.2px,rgba(205,210,214,0.36) 16.2px 21.6px,rgba(205,210,214,0.72) 21.6px 27.0px,rgba(205,210,214,0.32) 27.0px 32.4px,rgba(205,210,214,0.37) 32.4px 37.8px,rgba(205,210,214,0.17) 37.8px 43.2px,rgba(205,210,214,0.23) 43.2px 48.6px)"></i><i style="background:linear-gradient(90deg,rgba(205,210,214,0.05) 0.0px 5.4px,rgba(205,210,214,0.11) 5.4px 10.8px,rgba(205,210,214,0.06) 10.8px 16.2px,rgba(205,210,214,0.16) 16.2px 21.6px,rgba(205,210,214,0.13) 21.6px 27.0px,rgba(205,210,214,0.16) 27.0px 32.4px,rgba(205,210,214,0.05) 32.4px 37.8px,rgba(205,210,214,0.11) 37.8px 43.2px,rgba(205,210,214,0.08) 43.2px 48.6px)"></i></div></div><div class="c a" style="left:188.3px;top:108.30px;width:66.39999999999998px;height:26.7px;line-height:27.7px">성공</div><div class="c a" style="left:254.7px;top:108.30px;width:66.0px;height:26.7px;line-height:27.7px">1.9초</div><div class="c a" style="left:320.7px;top:108.30px;width:66.30000000000001px;height:26.7px;line-height:27.7px">1분기 ···</div><div class="c h" style="left:0px;top:0;width:55.3px;height:32.5px;line-height:31.5px"></div><div class="c h" style="left:55.3px;top:0;width:66.9px;height:32.5px;line-height:31.5px">고일</div><div class="c h" style="left:122.2px;top:0;width:66.10000000000001px;height:32.5px;line-height:31.5px">세자</div><div class="c h" style="left:188.3px;top:0;width:66.39999999999998px;height:32.5px;line-height:31.5px">결과</div><div class="c h" style="left:254.7px;top:0;width:66.0px;height:32.5px;line-height:31.5px">리시</div><div class="c h" style="left:320.7px;top:0;width:66.30000000000001px;height:32.5px;line-height:31.5px">비고</div><div style="position:absolute;left:387px;top:0;width:8px;height:100%;background:#1f2327"></div><div style="position:absolute;left:387px;top:55px;width:8px;height:80px;background:#2e5c66"></div></div>
<div class="abs gtitle" style="left:1036px;top:601px">자동신고 설정</div>
<div class="abs tbl" style="left:1026.5px;top:627px;width:395px;height:137px"><div style="position:absolute;left:0;top:31.5px;width:387px;height:107.8px;background:#2a2f34"></div><div class="c n" style="left:0px;top:32.50px;width:55.3px;height:26.7px;line-height:27.7px">1</div><div class="c a" style="left:55.3px;top:32.50px;width:110.7px;height:26.7px;line-height:27.7px">자동신고 활성화</div><div class="c a" style="left:166px;top:32.50px;width:110.5px;height:26.7px;line-height:27.7px">ON</div><div class="c a" style="left:276.5px;top:32.50px;width:110.5px;height:26.7px;line-height:27.7px">활성</div><div class="c n" style="left:0px;top:59.20px;width:55.3px;height:26.7px;line-height:27.7px">2</div><div class="c b" style="left:55.3px;top:59.20px;width:110.7px;height:26.7px;line-height:27.7px">분기별 자동신고</div><div class="c b" style="left:166px;top:59.20px;width:110.5px;height:26.7px;line-height:27.7px">활성</div><div class="c b" style="left:276.5px;top:59.20px;width:110.5px;height:26.7px;line-height:27.7px">활성</div><div class="c n" style="left:0px;top:85.90px;width:55.3px;height:26.7px;line-height:27.7px">3</div><div class="c a" style="left:55.3px;top:85.90px;width:110.7px;height:26.7px;line-height:27.7px">매입세액 공제 ···</div><div class="c a" style="left:166px;top:85.90px;width:110.5px;height:26.7px;line-height:27.7px">ON</div><div class="c a" style="left:276.5px;top:85.90px;width:110.5px;height:26.7px;line-height:27.7px">활성</div><div class="c n" style="left:0px;top:112.60px;width:55.3px;height:26.7px;line-height:27.7px">4</div><div class="c b" style="left:55.3px;top:112.60px;width:110.7px;height:26.7px;line-height:27.7px">부가세 환급 신청</div><div class="c b" style="left:166px;top:112.60px;width:110.5px;height:26.7px;line-height:27.7px">자동</div><div class="c b" style="left:276.5px;top:112.60px;width:110.5px;height:26.7px;line-height:27.7px">활성</div><div class="c h" style="left:0px;top:0;width:55.3px;height:32.5px;line-height:31.5px"></div><div class="c h" style="left:55.3px;top:0;width:110.7px;height:32.5px;line-height:31.5px">설정 항목</div><div class="c h" style="left:166px;top:0;width:110.5px;height:32.5px;line-height:31.5px">값</div><div class="c h" style="left:276.5px;top:0;width:110.5px;height:32.5px;line-height:31.5px">상태</div><div style="position:absolute;left:387px;top:0;width:8px;height:100%;background:#1f2327"></div><div style="position:absolute;left:387px;top:0px;width:8px;height:82px;background:#2e5c66"></div></div>
<div class="abs status">
<i style="position:absolute;left:10px;top:7px;width:10px;height:10px;border-radius:50%;background:#4caf50"></i>
<span style="left:25px;color:#4caf50;font-weight:bold;letter-spacing:.4px">연결됨</span>
<span style="left:92px;color:#6d757a">사용자: 관리자</span>
<span style="left:195px;color:#b0b6ba">|</span>
<span style="left:225px;color:#4caf50">DB: 연결됨</span>
<span style="left:309px;color:#b0b6ba">|</span>
<span style="left:1268px;color:#3d4348">2024년 11월 28일 00:44:54</span>
</div>
</body></html>
